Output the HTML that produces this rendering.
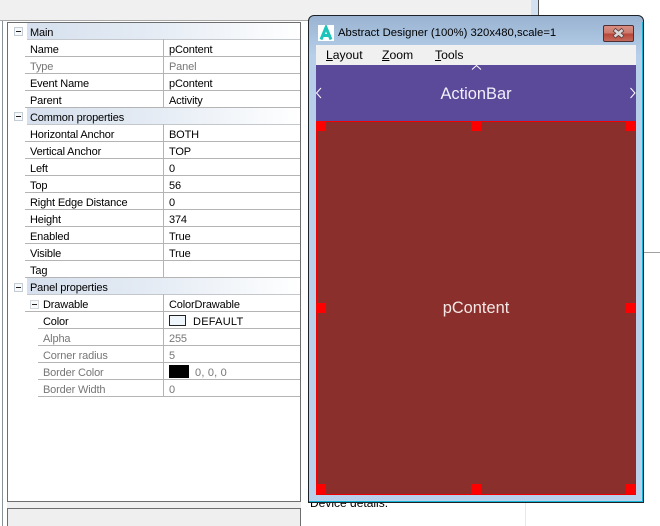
<!DOCTYPE html>
<html>
<head>
<meta charset="utf-8">
<style>
html,body{margin:0;padding:0;background:#fff}
#p{position:relative;width:660px;height:526px;overflow:hidden;background:#fff;font-family:"Liberation Sans",sans-serif;font-size:11px;letter-spacing:-.15px;color:#000}
#p div{position:absolute}
.r{left:17px;width:275px;height:17px;border-bottom:1px solid #b4b4b4;box-sizing:content-box}
.q{left:30px;width:262px}
.t,.v{position:absolute;top:3px;line-height:17px;white-space:nowrap}
.t{left:5px}
.v{left:144px}
.d{position:absolute;left:138px;top:0;width:1px;height:18px;background:#b4b4b4}
.q .d{left:125px}
.q .v{left:131px}
.g .t,.g .v{color:#767676}
.s{left:19px;width:273px;height:16px;background:linear-gradient(90deg,#d6e0ee 0,#e4ebf4 45%,#ffffff 100%);line-height:17px;border-bottom:1px solid #c4c8cc;box-sizing:content-box}
.s span{margin-left:3px;position:relative;top:2px}
.m{width:7px;height:7px;border:1px solid #c4ccd4;background:#f8f9fb}
.m:after{content:"";position:absolute;left:1px;top:3px;width:5px;height:1px;background:#222}
.h{width:10px;height:10px;background:#fe0000}
u{text-decoration:underline}
.mn{top:47px;line-height:16px;font-size:12.2px;letter-spacing:0;white-space:nowrap}
</style>
</head>
<body>
<div id="p">
  <div style="left:0;top:0;width:531px;height:20px;background:#f0f0f0"></div>
  <div style="left:0;top:20px;width:310px;height:1px;background:#a8a8a8"></div>
  <div style="left:2px;top:21px;width:1px;height:505px;background:#8a9299"></div>
  <div style="left:531px;top:0;width:7px;height:16px;background:#d3e1f0"></div>
  <div style="left:538px;top:0;width:1px;height:16px;background:#505050"></div>
  <div style="left:643px;top:252px;width:17px;height:1px;background:#a0a0a0"></div>
  <div style="left:525px;top:16px;width:1px;height:510px;background:#e8e8e8"></div>
  <div style="left:7px;top:502px;width:294px;height:24px;background:#f0f0f0"></div>
  <div style="left:7px;top:508px;width:294px;height:18px;background:#efefef;border:1px solid #6e6e6e;border-bottom:0;box-sizing:border-box"></div>
  <div style="left:310px;top:497px;line-height:13px;font-size:12px;letter-spacing:0;white-space:nowrap">Device details:</div>

  <div style="left:7px;top:22px;width:294px;height:480px;box-sizing:border-box;border:1px solid #6e6e6e;background:#fff">
    <div style="left:0;top:0;width:292px;height:478px;overflow:hidden">
      <div class="m" style="left:6px;top:4px"></div>
      <div class="s" style="top:0"><span>Main</span></div>
      <div class="r" style="top:16px"><span class="t">Name</span><span class="d"></span><span class="v">pContent</span></div>
      <div class="r g" style="top:33px"><span class="t">Type</span><span class="d"></span><span class="v">Panel</span></div>
      <div class="r" style="top:50px"><span class="t">Event Name</span><span class="d"></span><span class="v">pContent</span></div>
      <div class="r" style="top:67px"><span class="t">Parent</span><span class="d"></span><span class="v">Activity</span></div>

      <div class="m" style="left:6px;top:89px"></div>
      <div class="s" style="top:85px"><span>Common properties</span></div>
      <div class="r" style="top:101px"><span class="t">Horizontal Anchor</span><span class="d"></span><span class="v">BOTH</span></div>
      <div class="r" style="top:118px"><span class="t">Vertical Anchor</span><span class="d"></span><span class="v">TOP</span></div>
      <div class="r" style="top:135px"><span class="t">Left</span><span class="d"></span><span class="v">0</span></div>
      <div class="r" style="top:152px"><span class="t">Top</span><span class="d"></span><span class="v">56</span></div>
      <div class="r" style="top:169px"><span class="t">Right Edge Distance</span><span class="d"></span><span class="v">0</span></div>
      <div class="r" style="top:186px"><span class="t">Height</span><span class="d"></span><span class="v">374</span></div>
      <div class="r" style="top:203px"><span class="t">Enabled</span><span class="d"></span><span class="v">True</span></div>
      <div class="r" style="top:220px"><span class="t">Visible</span><span class="d"></span><span class="v">True</span></div>
      <div class="r" style="top:237px"><span class="t">Tag</span><span class="d"></span></div>

      <div class="m" style="left:6px;top:260px"></div>
      <div class="s" style="top:255px"><span>Panel properties</span></div>
      <div class="r" style="top:271px"><span class="t" style="left:18px">Drawable</span><span class="d"></span><span class="v">ColorDrawable</span></div>
      <div class="m" style="left:22px;top:277px;border-color:#d0d6dc"></div>
      <div class="r q" style="top:288px"><span class="t">Color</span><span class="d"></span><span class="v" style="left:155px;letter-spacing:.25px">DEFAULT</span>
        <div style="left:131px;top:4px;width:15px;height:9px;box-sizing:content-box;background:#eef5fb;border:1px solid #222"></div></div>
      <div class="r q g" style="top:305px"><span class="t">Alpha</span><span class="d"></span><span class="v">255</span></div>
      <div class="r q g" style="top:322px"><span class="t">Corner radius</span><span class="d"></span><span class="v">5</span></div>
      <div class="r q g" style="top:339px"><span class="t">Border Color</span><span class="d"></span><span class="v" style="left:157px;letter-spacing:.2px">0, 0, 0</span>
        <div style="left:131px;top:3px;width:20px;height:13px;background:#000"></div></div>
      <div class="r q g" style="top:356px"><span class="t">Border Width</span><span class="d"></span><span class="v">0</span></div>
    </div>
  </div>

  <!-- Window -->
  <div style="left:308px;top:15px;width:336px;height:488px;box-sizing:border-box;border:1px solid #1c2228;border-radius:6px 6px 0 0;background:linear-gradient(180deg,#99b3d1 0,#b7cfe9 40px,#b9d1ea 100%)"></div>
  <div style="left:642px;top:22px;width:1px;height:480px;background:#12b4d8"></div>
  <div style="left:309px;top:501px;width:334px;height:1px;background:#12b4d8"></div>

  <div style="left:318px;top:25px;width:16px;height:16px;background:#fff;overflow:hidden">
    <svg width="16" height="16" viewBox="0 0 16 16" style="position:absolute;left:0;top:0"><path d="M3 14.500 L8 2.500 L13 14.500 M5 10.500 H11" fill="none" stroke="#1cc4bc" stroke-width="3"/></svg>
  </div>
  <div style="left:338px;top:25px;line-height:17px;font-size:11.3px;letter-spacing:0;white-space:nowrap;color:#000">Abstract Designer (100%) 320x480,scale=1</div>

  <div style="left:603px;top:25px;width:31px;height:17px;box-sizing:border-box;border:1px solid #4e2f33;border-radius:2px;background:linear-gradient(180deg,#d98e82 0,#cc7a6c 45%,#b8483a 55%,#c4695c 100%)">
    <svg width="29" height="15" viewBox="0 0 29 15" style="position:absolute;left:0;top:0"><path d="M10 3.500 L19 11 M19 3.500 L10 11" fill="none" stroke="#5a3a3c" stroke-width="4.200"/><path d="M10.500 4 L18.500 10.500 M18.500 4 L10.500 10.500" fill="none" stroke="#d8d8d8" stroke-width="2.600"/></svg>
  </div>

  <div style="left:316px;top:45px;width:320px;height:20px;background:#f0f0f0"></div>
  <div class="mn" style="left:326px"><u>L</u>ayout</div>
  <div class="mn" style="left:382px"><u>Z</u>oom</div>
  <div class="mn" style="left:435px"><u>T</u>ools</div>

  <div style="left:316px;top:65px;width:320px;height:56px;background:#5b4a9a"></div>
  <div style="left:316px;top:85px;width:320px;text-align:center;line-height:18px;font-size:16.4px;letter-spacing:0;color:#f2f0fa">ActionBar</div>
  <svg width="320" height="56" viewBox="0 0 320 56" style="position:absolute;left:316px;top:65px">
    <path d="M156 4.500 L160.500 0.500 L165 4.500" fill="none" stroke="#fff" stroke-width="1"/>
    <path d="M5 23 L0.500 28 L5 33" fill="none" stroke="#fff" stroke-width="1"/>
    <path d="M314.500 23 L319 28 L314.500 33" fill="none" stroke="#fff" stroke-width="1"/>
  </svg>

  <div style="left:316px;top:121px;width:320px;height:374px;box-sizing:border-box;background:#8b2f2c;border:1px solid #f00000"></div>
  <div style="left:316px;top:299px;width:320px;text-align:center;line-height:18px;font-size:16.4px;letter-spacing:0;color:#f4e8e6">pContent</div>
  <div class="h" style="left:316px;top:121px"></div>
  <div class="h" style="left:471px;top:121px"></div>
  <div class="h" style="left:626px;top:121px"></div>
  <div class="h" style="left:316px;top:303px"></div>
  <div class="h" style="left:626px;top:303px"></div>
  <div class="h" style="left:316px;top:484px"></div>
  <div class="h" style="left:471px;top:484px"></div>
  <div class="h" style="left:626px;top:484px"></div>
</div>
</body>
</html>
